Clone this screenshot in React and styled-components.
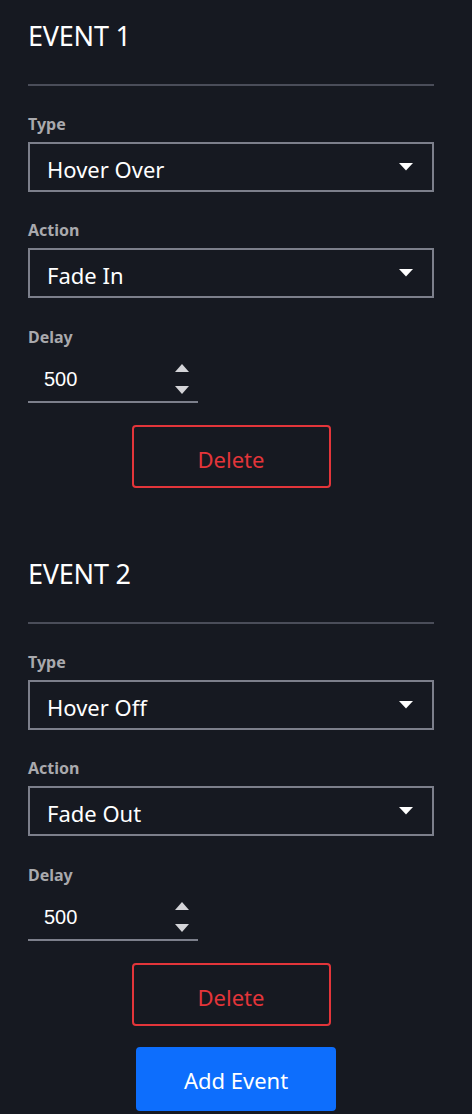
import React from "react";
import styled, { createGlobalStyle } from "styled-components";

const GlobalStyle = createGlobalStyle`
  html, body {
    margin: 0;
    padding: 0;
    background: #161921;
  }
  body {
    font-family: "Noto Sans", "Open Sans", sans-serif;
    color: #ffffff;
  }
`;

const Page = styled.div`
  width: 472px;
  min-height: 1114px;
  background: #161921;
  padding-bottom: 4px;
  box-sizing: border-box;
`;

const Events = styled.div`
  display: flex;
  flex-direction: column;
  gap: 50px;
  padding: 0 38px 0 28px;
`;

const Section = styled.section`
  display: flex;
  flex-direction: column;
`;

const Heading = styled.h2`
  margin: 18px 0 0;
  font-size: 27px;
  line-height: 36px;
  font-weight: 400;
  color: #ffffff;
  letter-spacing: -0.2px;
`;

const Divider = styled.hr`
  margin: 30px 0 0;
  border: none;
  height: 2px;
  background: #4a4d59;
`;

const Field = styled.div`
  display: flex;
  flex-direction: column;
  gap: ${(p) => p.$gap || 8}px;
  margin-top: ${(p) => p.$top || 28}px;
`;

const Label = styled.label`
  font-size: 16px;
  line-height: 20px;
  font-weight: 700;
  color: #a9a9ad;
`;

const SelectBox = styled.div`
  height: 50px;
  box-sizing: border-box;
  border: 2px solid #7c7f8b;
  display: flex;
  align-items: center;
  justify-content: space-between;
  padding: 0 19px 0 17px;
  font-size: 22px;
  color: #ffffff;

  span {
    padding-top: 4px;
  }
`;

const NumberBox = styled.div`
  width: 170px;
  height: 46px;
  box-sizing: border-box;
  border-bottom: 2px solid #7c7f8b;
  display: flex;
  align-items: center;
  justify-content: space-between;
  padding: 0 9px 0 16px;
  font-family: "Liberation Sans", Arial, sans-serif;
  font-size: 20px;
  color: #ffffff;
`;

const Spinner = styled.div`
  display: flex;
  flex-direction: column;
  gap: 14px;
`;

const Button = styled.button`
  display: block;
  margin: ${(p) => p.$top}px auto 0;
  width: ${(p) => p.$width}px;
  height: ${(p) => p.$height || 63}px;
  box-sizing: border-box;
  border-radius: 4px;
  padding: ${(p) => (p.$variant === "danger" ? 5 : 1)}px 0 0;
  font-family: "Noto Sans", "Open Sans", sans-serif;
  font-size: 22px;
  cursor: pointer;
  border: 2px solid ${(p) => (p.$variant === "danger" ? "#e3353a" : "#0d6efd")};
  background: ${(p) => (p.$variant === "danger" ? "transparent" : "#0d6efd")};
  color: ${(p) => (p.$variant === "danger" ? "#e3353a" : "#ffffff")};
`;

const Caret = () => (
  <svg width="14" height="8" viewBox="0 0 14 8">
    <path d="M0 0h14L7 7.5z" fill="#ffffff" />
  </svg>
);

const Arrow = ({ up }) => (
  <svg width="14" height="8" viewBox="0 0 14 8">
    <path d={up ? "M0 8h14L7 0z" : "M0 0h14L7 8z"} fill="#d4d4d8" />
  </svg>
);

const events = [
  { title: "EVENT 1", type: "Hover Over", action: "Fade In", delay: 500 },
  { title: "EVENT 2", type: "Hover Off", action: "Fade Out", delay: 500 },
];

function EventCard({ event }) {
  return (
    <Section>
      <Heading>{event.title}</Heading>
      <Divider />
      <Field>
        <Label>Type</Label>
        <SelectBox>
          <span>{event.type}</span>
          <Caret />
        </SelectBox>
      </Field>
      <Field>
        <Label>Action</Label>
        <SelectBox>
          <span>{event.action}</span>
          <Caret />
        </SelectBox>
      </Field>
      <Field $top={29} $gap={10}>
        <Label>Delay</Label>
        <NumberBox>
          <span>{event.delay}</span>
          <Spinner>
            <Arrow up />
            <Arrow />
          </Spinner>
        </NumberBox>
      </Field>
      <Button $variant="danger" $width={199} $top={22}>
        Delete
      </Button>
    </Section>
  );
}

export default function App() {
  return (
    <Page>
      <GlobalStyle />
      <Events>
        {events.map((e) => (
          <EventCard key={e.title} event={e} />
        ))}
      </Events>
      <Button $width={200} $height={64} $top={21}>
        Add Event
      </Button>
    </Page>
  );
}
